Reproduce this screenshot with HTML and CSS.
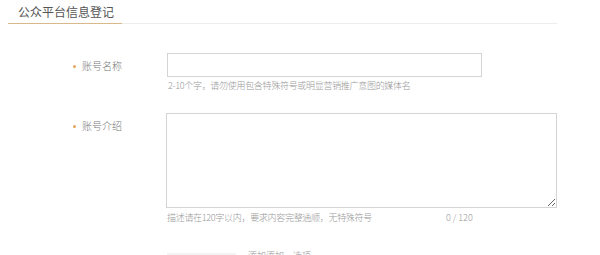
FILE: index.html
```html
<!DOCTYPE html>
<html lang="zh-CN">
<head>
    <meta charset="UTF-8">
    <meta name="viewport" content="width=device-width, initial-scale=1.0">
    <title>公众平台信息登记</title>
    <link rel="stylesheet" href="styles.css">
</head>
<body>

    <div class="page">
        <!-- 标题 -->
        <div class="page-head">
            <h2>公众平台信息登记</h2>
        </div>

        <!-- 表单 -->
        <div class="form">
            <div class="form-row">
                <label class="form-label">账号名称</label>
                <div class="form-field">
                    <input type="text" class="text-input" />
                    <p class="tips">2-10个字，请勿使用包含特殊符号或明显营销推广意图的媒体名</p>
                </div>
            </div>

            <div class="form-row row-intro">
                <label class="form-label">账号介绍</label>
                <div class="form-field">
                    <textarea class="text-area"></textarea>
                    <div class="tips-line">
                        <p class="tips">描述请在120字以内，要求内容完整通顺，无特殊符号</p>
                        <span class="counter">0 / 120</span>
                    </div>
                </div>
            </div>

            <div class="form-row row-extra">
                <div class="form-field extra-field">
                    <span class="extra-box"></span>
                    <span class="extra-text">添加添加一选项</span>
                </div>
            </div>
        </div>
    </div>

</body>
</html>
```

FILE: styles.css
```css
body {
    margin: 4px 8px 8px;
    font-family: "Noto Sans CJK SC", "Liberation Sans", sans-serif;
    background-color: #fff;
    color: #333;
    overflow: hidden;
}
.page {
    width: 549px;
}
.page-head {
    display: flex;
    border-bottom: 1px solid #ededed;
}
.page-head h2 {
    margin: 0 0 -1px 0;
    padding: 0 8px 0 10px;
    height: 20px;
    box-sizing: border-box;
    font-size: 12px;
    font-weight: normal;
    line-height: 15px;
    color: #555;
    border-bottom: 1px solid #d9b98c;
}
.form {
    margin-top: 29px;
    margin-left: 65px;
}
.form-row {
    display: flex;
}
.form-label {
    position: relative;
    width: 94px;
    padding-left: 9px;
    padding-top: 6px;
    box-sizing: border-box;
    font-size: 10px;
    font-weight: 300;
    line-height: 14px;
    color: #777;
}
.form-label::before {
    content: "";
    position: absolute;
    left: 0;
    top: 12px;
    width: 3px;
    height: 3px;
    border-radius: 50%;
    background-color: #e5a35a;
}
.text-input {
    display: block;
    width: 315px;
    height: 24px;
    margin: 0;
    border: 1px solid #d4d4d4;
    box-sizing: border-box;
    background-color: #fff;
}
.tips {
    margin: 3px 0 0 1px;
    font-size: 9px;
    font-weight: 300;
    line-height: 12px;
    color: #999;
    white-space: nowrap;
    letter-spacing: -0.3px;
}
.row-intro {
    margin-top: 21px;
}
.text-area {
    display: block;
    width: 391px;
    height: 95px;
    margin: 0;
    border: 1px solid #d4d4d4;
    box-sizing: border-box;
    resize: both;
}
.tips-line {
    display: flex;
    align-items: baseline;
    margin-top: 3px;
}
.tips-line .tips {
    margin-top: 0;
}
.counter {
    margin-left: 74px;
    font-size: 9px;
    font-weight: 300;
    color: #999;
}
.row-extra {
    margin-top: 26px;
    margin-left: 94px;
}
.extra-field {
    display: flex;
    align-items: flex-start;
}
.extra-box {
    display: block;
    width: 69px;
    height: 24px;
    margin-top: 3px;
    background-color: #f3f3f3;
}
.extra-text {
    margin-left: 12px;
    font-size: 9px;
    font-weight: 300;
    line-height: 12px;
    color: #999;
}
```
